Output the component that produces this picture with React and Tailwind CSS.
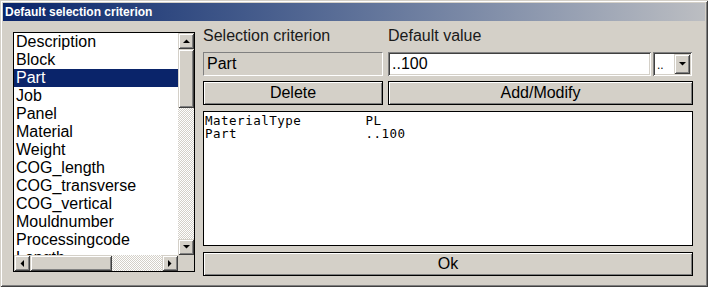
import React from 'react';

const raised =
  'shadow-[inset_1px_1px_0_#d4d0c8,inset_-1px_-1px_0_#404040,inset_2px_2px_0_#ffffff,inset_-2px_-2px_0_#808080]';
const sunken =
  'shadow-[inset_1px_1px_0_#808080,inset_-1px_-1px_0_#ffffff,inset_2px_2px_0_#404040,inset_-2px_-2px_0_#d4d0c8]';
const checker =
  'bg-[repeating-conic-gradient(#d4d0c8_0_25%,#ffffff_0_50%)] bg-[length:2px_2px]';

const items = [
  'Description',
  'Block',
  'Part',
  'Job',
  'Panel',
  'Material',
  'Weight',
  'COG_length',
  'COG_transverse',
  'COG_vertical',
  'Mouldnumber',
  'Processingcode',
  'Length',
];

const Arrow = ({ dir }) => {
  const pts = {
    up: '0,4 7,4 3.5,0.5',
    down: '0,0 7,0 3.5,3.5',
    left: '4,0 4,7 0.5,3.5',
    right: '0,0 0,7 3.5,3.5',
  }[dir];
  const horiz = dir === 'left' || dir === 'right';
  return (
    <svg width={horiz ? 4 : 7} height={horiz ? 7 : 4} viewBox={horiz ? '0 0 4 7' : '0 0 7 4'}>
      <polygon points={pts} fill="#000" />
    </svg>
  );
};

const ScrollBtn = ({ dir, className = '' }) => (
  <div className={`w-[16px] h-[16px] bg-[#d4d0c8] flex items-center justify-center ${raised} ${className}`}>
    <Arrow dir={dir} />
  </div>
);

const Button = ({ children, className = '' }) => (
  <button
    className={`h-[24px] bg-[#d4d0c8] border border-black text-[16px] leading-[18px] text-black shadow-[inset_1px_1px_0_#ffffff,inset_-1px_-1px_0_#808080] ${className}`}
  >
    {children}
  </button>
);

export default function App() {
  return (
    <div
      className="w-[708px] h-[287px] bg-[#d4d0c8] p-[3px] flex flex-col shadow-[inset_1px_1px_0_#d4d0c8,inset_-1px_-1px_0_#404040,inset_2px_2px_0_#ffffff,inset_-2px_-2px_0_#808080]"
      style={{ fontFamily: '"Liberation Sans", Arial, sans-serif' }}
    >
      {/* title bar */}
      <div className="h-[18px] bg-gradient-to-r from-[#0a246a] to-[#bcbec2] flex items-center pl-[2px]">
        <span className="text-white font-bold text-[12px] leading-[14px]">Default selection criterion</span>
      </div>

      <div className="flex pl-[10px] pt-[6px] gap-[8px]">
        {/* list box */}
        <div className="mt-[5px] w-[182px] h-[240px] border border-black bg-white flex flex-col">
          <div className="flex h-[222px]">
            <div className="w-[164px] overflow-hidden">
              {items.map((it) => (
                <div
                  key={it}
                  className={`h-[18px] leading-[18px] text-[16px] pl-[2px] whitespace-nowrap ${
                    it === 'Part' ? 'bg-[#0a246a] text-white' : 'text-black'
                  }`}
                >
                  {it}
                </div>
              ))}
            </div>
            <div className="w-[16px] flex flex-col">
              <ScrollBtn dir="up" />
              <div className={`h-[59px] bg-[#d4d0c8] ${raised}`} />
              <div className={`flex-1 ${checker}`} />
              <ScrollBtn dir="down" />
            </div>
          </div>
          <div className="flex h-[16px]">
            <ScrollBtn dir="left" />
            <div className={`w-[82px] h-[16px] bg-[#d4d0c8] ${raised}`} />
            <div className={`flex-1 ${checker}`} />
            <ScrollBtn dir="right" />
            <div className="w-[16px] h-[16px] bg-[#d4d0c8]" />
          </div>
        </div>

        {/* right column */}
        <div className="w-[490px] flex flex-col">
          <div className="h-[25px] flex text-[16px] leading-[18px] text-[#1a1a1a]">
            <div className="w-[185px]">Selection criterion</div>
            <div>Default value</div>
          </div>

          <div className="h-[24px] flex">
            <div className="w-[180px] h-[24px] border border-t-[#808080] border-l-[#808080] border-b-white border-r-white text-[16px] leading-[22px] pl-[3px] text-black">
              Part
            </div>
            <div className={`ml-[5px] w-[263px] h-[24px] bg-white ${sunken} text-[16px] leading-[24px] pl-[4px] text-black`}>
              ..100
            </div>
            <div className={`ml-[2px] w-[39px] h-[24px] bg-white ${sunken} p-[2px] flex`}>
              <div className="flex-1 text-[12px] leading-[22px] pl-[2px] text-black">..</div>
              <div className={`w-[16px] h-[20px] bg-[#d4d0c8] flex items-center justify-center ${raised}`}>
                <Arrow dir="down" />
              </div>
            </div>
          </div>

          <div className="mt-[5px] flex gap-[5px]">
            <Button className="w-[180px]">Delete</Button>
            <Button className="flex-1">Add/Modify</Button>
          </div>

          <div
            className="mt-[6px] h-[135px] bg-white border border-black pl-[1px] pt-[2px] text-[12.5px] leading-[13px] tracking-[0.5px] text-black whitespace-pre"
            style={{ fontFamily: '"DejaVu Sans Mono", "Liberation Mono", monospace' }}
          >
            <div>{'MaterialType        PL'}</div>
            <div>{'Part                ..100'}</div>
          </div>

          <Button className="mt-[6px] w-full">Ok</Button>
        </div>
      </div>
    </div>
  );
}
